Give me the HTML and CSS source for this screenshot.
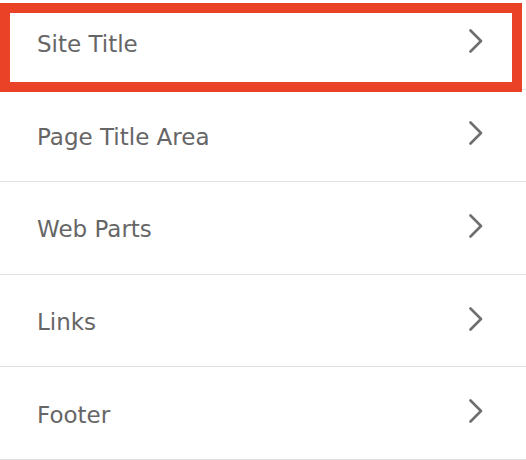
FILE: index.html
```html
<!DOCTYPE html>
<html lang="en">
<head>
<meta charset="utf-8">
<title>Menu</title>
<link rel="stylesheet" href="styles.css">
</head>
<body>
<ul class="menu">
  <li class="menu-item is-highlighted">
    <span class="menu-label">Site Title</span>
    <svg class="chevron" width="14" height="24" viewBox="0 0 14 24"><polyline points="1.5,1.5 12,12 1.5,22.5"/></svg>
    <span class="highlight-box"></span>
  </li>
  <li class="menu-item">
    <span class="menu-label">Page Title Area</span>
    <svg class="chevron" width="14" height="24" viewBox="0 0 14 24"><polyline points="1.5,1.5 12,12 1.5,22.5"/></svg>
  </li>
  <li class="menu-item">
    <span class="menu-label">Web Parts</span>
    <svg class="chevron" width="14" height="24" viewBox="0 0 14 24"><polyline points="1.5,1.5 12,12 1.5,22.5"/></svg>
  </li>
  <li class="menu-item">
    <span class="menu-label">Links</span>
    <svg class="chevron" width="14" height="24" viewBox="0 0 14 24"><polyline points="1.5,1.5 12,12 1.5,22.5"/></svg>
  </li>
  <li class="menu-item">
    <span class="menu-label">Footer</span>
    <svg class="chevron" width="14" height="24" viewBox="0 0 14 24"><polyline points="1.5,1.5 12,12 1.5,22.5"/></svg>
  </li>
</ul>
</body>
</html>
```

FILE: styles.css
```css
html, body {
  margin: 0;
  padding: 0;
  background: #ffffff;
  overflow: hidden;
}

.menu {
  list-style: none;
  margin: -3px 0 0 0;
  padding: 0;
  font-family: "DejaVu Sans", Verdana, sans-serif;
}

.menu-item {
  position: relative;
  box-sizing: border-box;
  height: 92.6px;
  display: flex;
  align-items: center;
  justify-content: space-between;
  padding: 0 43px 0 37px;
  border-bottom: 1px solid #e0e0e0;
}

.menu-label {
  font-size: 23px;
  color: #666666;
  padding-top: 3px;
}

.chevron {
  display: block;
  margin-bottom: 4px;
  fill: none;
  stroke: #6e6e6e;
  stroke-width: 2.6;
  stroke-linecap: round;
  stroke-linejoin: round;
}

.highlight-box {
  position: absolute;
  left: 0;
  top: 6px;
  width: 522px;
  height: 89px;
  box-sizing: border-box;
  border: 10px solid #e94226;
  pointer-events: none;
}
```
